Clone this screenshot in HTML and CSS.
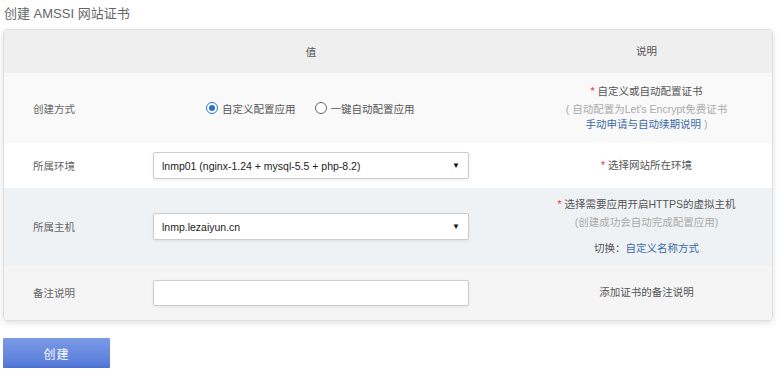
FILE: index.html
```
<!DOCTYPE html>
<html lang="zh-CN">
<head>
    <meta charset="UTF-8">
    <title>创建 AMSSI 网站证书</title>
    <link rel="stylesheet" href="styles.css">
</head>
<body>

<h1 class="page-title">创建 AMSSI 网站证书</h1>

<div class="panel">
    <div class="row row-head">
        <div class="cell cell-label"></div>
        <div class="cell cell-value head-center">值</div>
        <div class="cell cell-desc">说明</div>
    </div>

    <div class="row row-method">
        <div class="cell cell-label">创建方式</div>
        <div class="cell cell-value radios">
            <label class="radio"><span class="dot checked"></span>自定义配置应用</label>
            <label class="radio"><span class="dot"></span>一键自动配置应用</label>
        </div>
        <div class="cell cell-desc">
            <div class="first"><span class="req">*</span> 自定义或自动配置证书</div>
            <div class="muted">( 自动配置为Let's Encrypt免费证书</div>
            <div><a class="link">手动申请与自动续期说明</a> <span class="muted">)</span></div>
        </div>
    </div>

    <div class="row row-env">
        <div class="cell cell-label">所属环境</div>
        <div class="cell cell-value">
            <div class="select">lnmp01 (nginx-1.24 + mysql-5.5 + php-8.2)<span class="caret">▼</span></div>
        </div>
        <div class="cell cell-desc"><span class="req">*</span> 选择网站所在环境</div>
    </div>

    <div class="row row-host">
        <div class="cell cell-label">所属主机</div>
        <div class="cell cell-value">
            <div class="select">lnmp.lezaiyun.cn<span class="caret">▼</span></div>
        </div>
        <div class="cell cell-desc">
            <div class="first"><span class="req">*</span> 选择需要应用开启HTTPS的虚拟主机</div>
            <div class="muted">(创建成功会自动完成配置应用)</div>
            <div class="switch">切换：<a class="link">自定义名称方式</a></div>
        </div>
    </div>

    <div class="row row-note">
        <div class="cell cell-label">备注说明</div>
        <div class="cell cell-value">
            <div class="text-input"></div>
        </div>
        <div class="cell cell-desc">添加证书的备注说明</div>
    </div>
</div>

<button class="btn-create">创建</button>

</body>
</html>
```

FILE: styles.css
```
* {
    box-sizing: border-box;
}

body {
    margin: 0;
    padding: 0 7px 0 3px;
    font-family: "Liberation Sans", "Noto Sans CJK SC", sans-serif;
    font-size: 10.5px;
    color: #555;
    background: #fff;
}

.page-title {
    margin: 0;
    padding: 3px 0 0 1px;
    height: 29px;
    font-size: 13px;
    font-weight: normal;
    color: #666;
}

.panel {
    border: 1px solid #ddd;
    border-radius: 4px;
    overflow: hidden;
    box-shadow: 0 2px 6px rgba(0,0,0,0.12);
}

.row {
    display: grid;
    grid-template-columns: 149px 316px 1fr;
    align-items: center;
}

.cell-label {
    padding-left: 29px;
    color: #666;
}

.cell-desc {
    padding-left: 52px;
    text-align: center;
    line-height: 15px;
    color: #555;
}

.cell-desc .first {
    margin-bottom: 3px;
}

.row-head {
    height: 43px;
    background: #efefef;
    color: #555;
}

.head-center {
    text-align: center;
}

.row-method {
    height: 70px;
    background: #f9f9f9;
}

.row-env {
    height: 45px;
    background: #fff;
}

.row-host {
    height: 77px;
    background: #eff2f5;
}

.row-note {
    height: 55px;
    background: #f5f5f5;
}

.radios {
    display: flex;
    gap: 19px;
    padding-left: 53px;
}

.radio {
    display: flex;
    align-items: center;
    color: #555;
}

.dot {
    width: 12px;
    height: 12px;
    border: 1.2px solid #666;
    border-radius: 50%;
    margin-right: 4px;
    background: #fff;
    position: relative;
}

.dot.checked {
    border: 1.5px solid #2b6fd6;
}

.dot.checked::after {
    content: "";
    position: absolute;
    left: 1.5px;
    top: 1.5px;
    width: 6px;
    height: 6px;
    border-radius: 50%;
    background: #2b6fd6;
}

.select,
.text-input {
    height: 27px;
    border: 1px solid #ccc;
    border-radius: 2px;
    background: #fff;
    box-shadow: 0 1px 3px rgba(0,0,0,0.08);
    display: flex;
    align-items: center;
    padding: 0 8px;
    color: #222;
}

.select {
    justify-content: space-between;
}

.text-input {
    height: 26px;
}

.caret {
    font-size: 8px;
    color: #111;
}

.req {
    color: #e33;
}

.muted {
    color: #aaa;
}

.link {
    color: #3a6aa5;
}

.switch {
    margin-top: 11px;
    color: #555;
}

.btn-create {
    margin-top: 17px;
    width: 107px;
    height: 30px;
    border: none;
    border-radius: 1px;
    background: linear-gradient(#7b9ae6, #5c80dc 80%, #4b70d2);
    color: #fff;
    font-family: "Liberation Sans", "Noto Sans CJK SC", sans-serif;
    font-size: 12px;
    letter-spacing: 1px;
    cursor: pointer;
}
```
